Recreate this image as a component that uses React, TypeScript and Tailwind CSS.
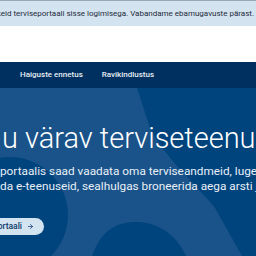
import { ArrowRight } from 'lucide-react'

export default function App() {
  return (
    <div className="w-[256px] h-[256px] overflow-hidden bg-white font-['Roboto',sans-serif]">
      <div className="h-[26px] bg-[#d4e3f0] border-t border-[#9aa8b6] flex items-center justify-end pr-[2px] overflow-hidden">
        <p className="whitespace-nowrap text-[8px] text-[#1e2b3a]">
          Hetkel esineb tõrkeid terviseportaali sisse logimisega. Vabandame ebamugavuste pärast.
        </p>
      </div>

      <div className="h-[36px] bg-white" />

      <nav className="h-[26px] bg-[#00305f] flex items-center gap-[19px] pl-[20px] text-[8px] font-medium text-[#e6edf5] whitespace-nowrap">
        <span>Haiguste ennetus</span>
        <span>Ravikindlustus</span>
      </nav>

      <section className="relative h-[168px] bg-[#00447e] overflow-hidden">
        <svg className="absolute inset-0" width="256" height="168" viewBox="0 0 256 168">
          <path d="M0 0 H137 L150 40 C165 70 195 95 215 120 L242 168 H0 Z" fill="#195389" />
          <circle cx="10" cy="127" r="58" fill="#00447e" />
          <path d="M92 168 C102 138 122 133 140 134 C162 136 178 150 186 168 Z" fill="#00447e" />
        </svg>

        <div className="relative flex flex-col pl-[2px] text-white whitespace-nowrap">
          <h1 className="mt-[33px] text-[29px] font-light leading-[34px]">u värav terviseteenustesse</h1>
          <p className="mt-[9px] text-[11.8px] leading-[15px] text-[#e8eff6] -ml-[2px]">
            portaalis saad vaadata oma terviseandmeid, lugeda
            <br />
            da e-teenuseid, sealhulgas broneerida aega arsti juurde
          </p>
          <div className="mt-[24px] -ml-[2px] w-[44px] flex justify-end">
            <a className="shrink-0 flex items-center gap-[5px] h-[17px] pl-[12px] pr-[10px] rounded-full bg-[#d4e3f0] text-[8.5px] font-medium text-[#0b3a6a]">
              Terviseportaali
              <ArrowRight size={7} strokeWidth={2.5} />
            </a>
          </div>
        </div>
      </section>
    </div>
  )
}
